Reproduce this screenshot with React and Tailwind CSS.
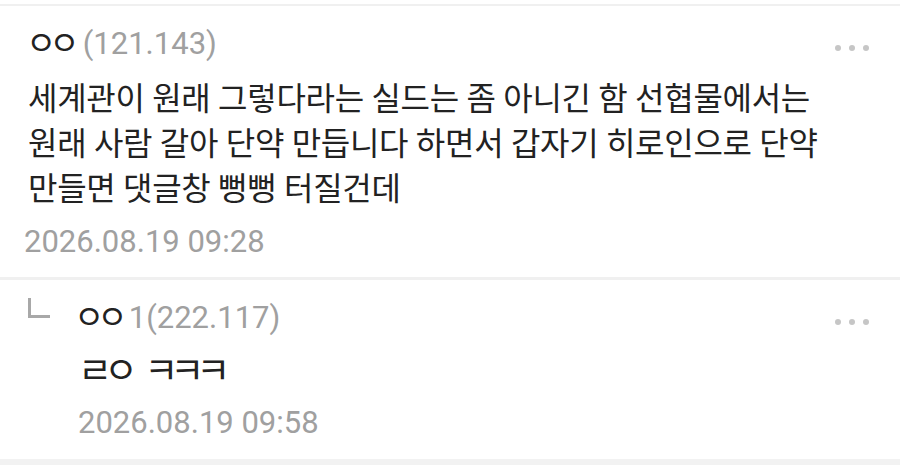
import React from "react";

const font = { fontFamily: "Roboto, 'Noto Sans CJK KR', sans-serif" };

function Dots() {
  return (
    <div className="flex items-center gap-[8px] pt-[10px]">
      <span className="block w-[6px] h-[6px] rounded-full bg-[#c6c6c6]" />
      <span className="block w-[6px] h-[6px] rounded-full bg-[#c6c6c6]" />
      <span className="block w-[6px] h-[6px] rounded-full bg-[#c6c6c6]" />
    </div>
  );
}

export default function App() {
  return (
    <div className="w-[900px] h-[465px] overflow-hidden bg-white" style={font}>
      <div className="h-[4px]" />
      <div className="h-[2px] bg-[#f0f0f0]" />
      {/* Comment */}
      <div className="bg-white h-[271px] pl-[28px] pr-[31px] pt-[7px]">
        <div className="flex items-center justify-between h-[60px]">
          <div className="flex items-center leading-none">
            <span className="text-[33px] text-[#222] tracking-[-7px] mr-[10px] -ml-[2px]">ㅇㅇ</span>
            <span className="text-[31px] text-[#a0a0a0]">(121.143)</span>
          </div>
          <Dots />
        </div>
        <div className="mt-[4px] text-[32px] leading-[45px] text-[#222] tracking-[-0.3px]">
          <div>세계관이 원래 그렇다라는 실드는 좀 아니긴 함 선협물에서는</div>
          <div>원래 사람 갈아 단약 만듭니다 하면서 갑자기 히로인으로 단약</div>
          <div>만들면 댓글창 뻥뻥 터질건데</div>
        </div>
        <div className="mt-[10px] h-[40px] flex items-center text-[31px] text-[#a0a0a0] -ml-[4px]">
          2026.08.19 09:28
        </div>
      </div>
      <div className="h-[3px] bg-[#f0f0f0]" />
      {/* Reply */}
      <div className="bg-white h-[179px] pl-[28px] pr-[31px] pt-[12px]">
        <div className="flex items-center justify-between h-[50px]">
          <div className="flex items-center">
            <div className="w-[22px] h-[20px] border-l-[3px] border-b-[3px] border-[#a8a8a8] mb-[18px]" />
            <div className="flex items-center leading-none ml-[26px]">
              <span className="text-[33px] text-[#222] tracking-[-7px] mr-[8px] -ml-[2px]">ㅇㅇ</span>
              <span className="text-[31px] text-[#a0a0a0]">1(222.117)</span>
            </div>
          </div>
          <Dots />
        </div>
        <div className="pl-[50px] mt-[10px] h-[40px] flex items-center text-[37px] tracking-[-8px] [word-spacing:13px] text-[#222]">
          ㄹㅇ ㅋㅋㅋ
        </div>
        <div className="pl-[50px] mt-[11px] h-[40px] flex items-center text-[31px] text-[#a0a0a0]">
          2026.08.19 09:58
        </div>
      </div>
      <div className="h-[6px] bg-[#f2f2f2]" />
    </div>
  );
}
